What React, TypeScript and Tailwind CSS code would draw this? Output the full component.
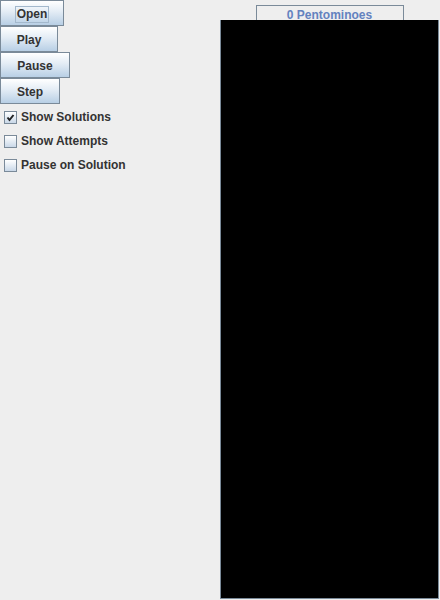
import React from "react";

const btn =
  "flex h-[26px] items-center justify-center border border-[#7a8a99] bg-[linear-gradient(to_bottom,#ffffff_0%,#e3ecf5_45%,#b8cfe5_100%)] pt-[2px] text-[12px] font-bold text-[#333333]";

const Check: React.FC<{ label: string; checked?: boolean }> = ({ label, checked }) => (
  <div className="flex h-[24px] items-center gap-[4px] pl-[4px] pt-[2px]">
    <div className="flex h-[13px] w-[13px] items-center justify-center border border-[#7a8a99] bg-[linear-gradient(to_bottom,#ffffff,#c9d8e8)]">
      {checked && (
        <svg width="9" height="9" viewBox="0 0 9 9">
          <path d="M1.5 4.5 L3.5 7 L7.5 2" stroke="#222" strokeWidth="2" fill="none" />
        </svg>
      )}
    </div>
    <span className="text-[12px] font-bold text-[#333333]">{label}</span>
  </div>
);

export default function App() {
  return (
    <div
      className="flex h-[600px] w-[440px] bg-[#eeeeee]"
      style={{ fontFamily: '"Liberation Sans", Arial, sans-serif' }}
    >
      <div className="flex w-[220px] flex-col">
        <div className={`${btn} w-[64px]`}>
          <span className="border border-[#a3b8cc] px-[1px] leading-[15px]">Open</span>
        </div>
        <div className={`${btn} w-[58px]`}>Play</div>
        <div className={`${btn} w-[70px]`}>Pause</div>
        <div className={`${btn} w-[60px]`}>Step</div>
        <Check label="Show Solutions" checked />
        <Check label="Show Attempts" />
        <Check label="Pause on Solution" />
      </div>
      <div className="flex w-[219px] flex-col items-center pt-[5px]">
        <div className="h-[15px] w-[148px] overflow-hidden border-x border-t border-[#7a8a99] text-center text-[12px] font-bold leading-[19px] text-[#6382bf]">
          0 Pentominoes
        </div>
        <div className="h-[579px] w-[219px] border-x border-b border-[#7a8a99] border-t-black bg-black" />
      </div>
    </div>
  );
}
